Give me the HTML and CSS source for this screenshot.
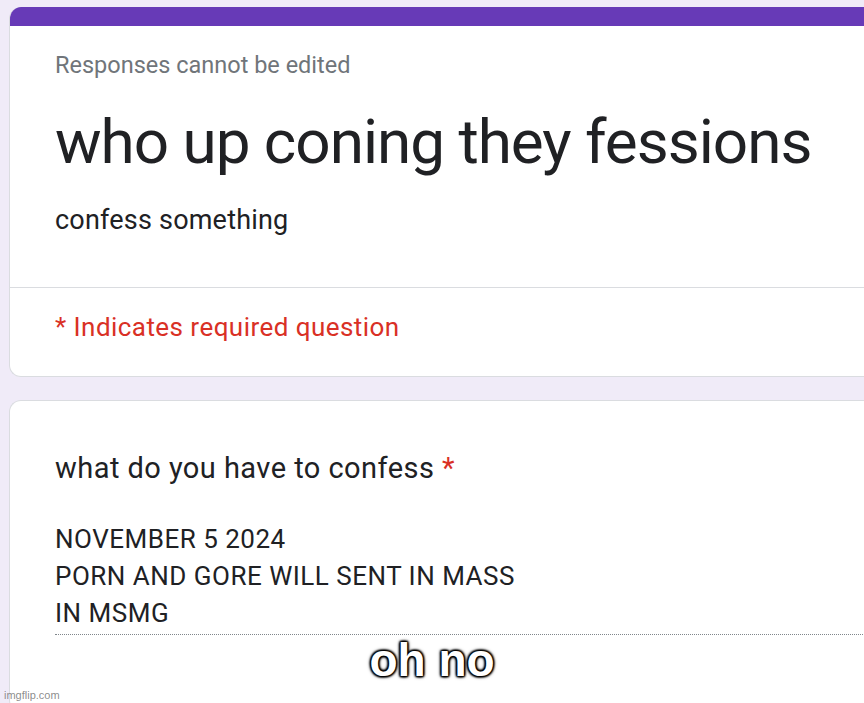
FILE: index.html
```html
<!DOCTYPE html>
<html>
<head>
<meta charset="utf-8">
<link rel="stylesheet" href="styles.css">
</head>
<body>
<div class="page">
  <section class="card header-card">
    <div class="band"></div>
    <div class="head-top">
      <div class="note">Responses cannot be edited</div>
      <h1 class="title">who up coning they fessions</h1>
      <div class="desc">confess something</div>
    </div>
    <div class="req-row">
      <span class="req">* Indicates required question</span>
    </div>
  </section>
  <section class="card question-card">
    <div class="question">what do you have to confess <span class="star">*</span></div>
    <div class="answer">NOVEMBER 5 2024<br>PORN AND GORE WILL SENT IN MASS<br>IN MSMG</div>
    <div class="answer-line"></div>
  </section>
</div>
<div class="caption">oh no</div>
<div class="watermark">imgflip.com</div>
</body>
</html>
```
FILE: styles.css
```css
html, body {
  margin: 0;
  padding: 0;
}
body {
  background: #f0ebf8;
  width: 864px;
  height: 703px;
  overflow: hidden;
  position: relative;
  font-family: Roboto, "Liberation Sans", sans-serif;
  color: #202124;
}
.page {
  padding: 7px 0 0 9px;
  width: 900px;
}
.card {
  background: #fff;
  border: 1px solid #dadce0;
  border-right: none;
  border-radius: 12px 0 0 12px;
  overflow: hidden;
}
.header-card {
  height: 369px;
  border-top: none;
}
.band {
  height: 19px;
  background: #673ab7;
}
.head-top {
  padding: 25px 0 0 45px;
  height: 262px;
  border-bottom: 1px solid #dadce0;
  box-sizing: border-box;
}
.note {
  font-size: 23.5px;
  line-height: 28px;
  color: #70757a;
}
.title {
  margin: 28px 0 0;
  font-size: 62px;
  font-weight: 400;
  line-height: 70px;
  letter-spacing: -1px;
  color: #202124;
}
.desc {
  margin-top: 27px;
  font-size: 27px;
  line-height: 32px;
  letter-spacing: 0.2px;
}
.req-row {
  padding: 24px 0 0 45px;
}
.req {
  font-size: 26px;
  line-height: 30px;
  letter-spacing: 0.45px;
  color: #d93025;
}
.question-card {
  margin-top: 23px;
  height: 310px;
  padding-left: 45px;
}
.question {
  margin-top: 49px;
  font-size: 29px;
  line-height: 36px;
  letter-spacing: 0.45px;
}
.star {
  color: #d93025;
}
.answer {
  margin-top: 35px;
  font-size: 26px;
  line-height: 37px;
  letter-spacing: 0.5px;
}
.answer-line {
  border-top: 1px dotted #80868b;
  margin-top: 2px;
}
.caption {
  position: absolute;
  left: 0;
  right: 0;
  top: 635px;
  text-align: center;
  font-family: "Liberation Sans", Arial, sans-serif;
  font-weight: 700;
  font-size: 46px;
  line-height: 50px;
  color: #fff;
  text-shadow: 0 0 4px #000, 0 0 3px #000, 0 0 2px #000, 1px 1px 2px #000, -1px -1px 2px #000, 1px -1px 2px #000, -1px 1px 2px #000;
}
.watermark {
  position: absolute;
  left: 4px;
  bottom: 2px;
  font-family: "Liberation Sans", Arial, sans-serif;
  font-size: 11px;
  color: rgba(128,128,128,0.9);
}
```
